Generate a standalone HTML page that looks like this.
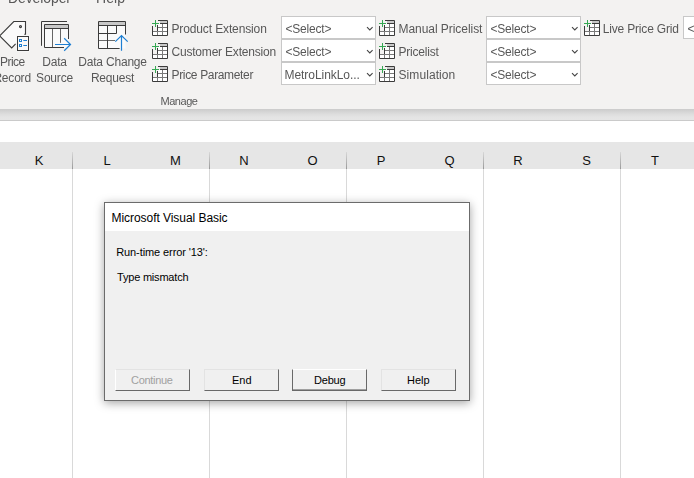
<!DOCTYPE html>
<html><head><meta charset="utf-8">
<style>
html,body{margin:0;padding:0;}
body{width:694px;height:478px;overflow:hidden;position:relative;background:#fff;font-family:"Liberation Sans",sans-serif;}
.abs{position:absolute;}
#ribbon{left:0;top:0;width:694px;height:109px;background:#f3f2f1;}
#shadow{left:0;top:109px;width:694px;height:11px;background:linear-gradient(#cbcbcb,#d3d3d3 20%,#dedede 50%,#e4e4e4 75%,#e5e5e5);border-bottom:1px solid #cacaca;}
#hdr{left:0;top:142px;width:694px;height:27px;background:#e6e6e6;}
.t{position:absolute;white-space:nowrap;color:#585858;line-height:14px;}
.sel{position:absolute;width:93px;height:21px;border:1px solid #c8c8c8;background:#fff;}
.col{position:absolute;font-size:13px;line-height:15px;color:#111;transform:translateX(-50%);top:153px;}
.vl{position:absolute;width:1px;top:152px;height:17px;background:linear-gradient(#d8d8d8,#999);}
.vb{position:absolute;width:1px;top:169px;height:309px;background:#d9d9d9;}
#dlg{left:104px;top:202px;width:364px;height:197px;border:1px solid #6b6b6b;background:#f0f0f0;box-shadow:0 2px 9px rgba(0,0,0,0.36);}
#ttl{left:0;top:0;width:364px;height:28px;background:#fff;}
.d{position:absolute;white-space:nowrap;color:#000;line-height:13px;}
.btn{position:absolute;top:166px;width:73px;height:20px;border:1px solid;border-color:#e3e3e3 #696969 #696969 #e3e3e3;background:#f0f0f0;font-size:11px;line-height:13px;text-align:center;}
</style></head><body>
<div id="ribbon" class="abs"></div>
<div id="shadow" class="abs"></div>
<div id="hdr" class="abs"></div>




<div class="sel" style="left:281px;top:16px;"></div>
<div class="sel" style="left:281px;top:39px;"></div>
<div class="sel" style="left:281px;top:62px;"></div>
<div class="sel" style="left:486px;top:16px;"></div>
<div class="sel" style="left:486px;top:39px;"></div>
<div class="sel" style="left:486px;top:62px;"></div>
<div class="sel" style="left:683px;top:16px;"></div>

<div id="rt" class="abs" style="left:0;top:0;width:694px;height:109px;will-change:transform;">
<div class="t" style="left:8.00px;top:-9px;font-size:14px;letter-spacing:-0.10px;">Developer</div>
<div class="t" style="left:96.00px;top:-9px;font-size:14px;letter-spacing:0.07px;">Help</div>
<div class="t" style="left:0.00px;top:55px;font-size:12px;letter-spacing:-0.55px;">Price</div>
<div class="t" style="left:-6.60px;top:71px;font-size:12px;letter-spacing:-0.20px;">Record</div>
<div class="t" style="left:42.20px;top:55px;font-size:12px;letter-spacing:-0.20px;">Data</div>
<div class="t" style="left:36.10px;top:71px;font-size:12px;letter-spacing:-0.20px;">Source</div>
<div class="t" style="left:78.30px;top:55px;font-size:12px;letter-spacing:-0.20px;">Data Change</div>
<div class="t" style="left:90.90px;top:71px;font-size:12px;letter-spacing:-0.20px;">Request</div>
<div class="t" style="left:171.50px;top:22px;font-size:12px;letter-spacing:-0.13px;">Product Extension</div>
<div class="t" style="left:171.50px;top:45px;font-size:12px;letter-spacing:-0.20px;">Customer Extension</div>
<div class="t" style="left:171.50px;top:68px;font-size:12px;letter-spacing:-0.34px;">Price Parameter</div>
<div class="t" style="left:398.50px;top:22px;font-size:12px;letter-spacing:-0.05px;">Manual Pricelist</div>
<div class="t" style="left:398.50px;top:45px;font-size:12px;letter-spacing:-0.20px;">Pricelist</div>
<div class="t" style="left:398.50px;top:68px;font-size:12px;letter-spacing:0.08px;">Simulation</div>
<div class="t" style="left:602.70px;top:22px;font-size:12px;letter-spacing:-0.17px;">Live Price Grid</div>
<div class="t" style="left:160.50px;top:94px;font-size:11px;letter-spacing:-0.46px;">Manage</div>
<div class="t" style="left:285.50px;top:22px;font-size:12px;letter-spacing:-0.20px;">&lt;Select&gt;</div>
<div class="t" style="left:285.50px;top:45px;font-size:12px;letter-spacing:-0.20px;">&lt;Select&gt;</div>
<div class="t" style="left:284.50px;top:68px;font-size:12px;letter-spacing:-0.05px;">MetroLinkLo...</div>
<div class="t" style="left:490.50px;top:22px;font-size:12px;letter-spacing:-0.20px;">&lt;Select&gt;</div>
<div class="t" style="left:490.50px;top:45px;font-size:12px;letter-spacing:-0.20px;">&lt;Select&gt;</div>
<div class="t" style="left:490.50px;top:68px;font-size:12px;letter-spacing:-0.20px;">&lt;Select&gt;</div>
<div class="t" style="left:687.50px;top:22px;font-size:12px;letter-spacing:-0.20px;">&lt;Select&gt;</div>
</div>
<svg class="abs" style="left:0;top:0" width="694" height="109" viewBox="0 0 694 109" fill="none">
<defs>
<g id="ti">
<path d="M6 4H15V15H1V12H6Z" fill="#fff"/>
<rect x="8" y="1" width="7" height="2" fill="#c8c8c8"/>
<path d="M5.5 11V15M10.5 4V15M6 7.5H15M1 11.5H15" stroke="#7a7a7a"/>
<path d="M0.5 6V15.5H15.5V0.5H6M8 3.5H15M5.5 5V11" stroke="#3b3b3b"/>
<path d="M3.5 0V7M0 3.5H7" stroke="#35a853"/>
</g>
<path id="chev" d="M0 0L2.8 2.7L5.6 0" stroke="#444" stroke-width="1.1"/>
</defs>
<use href="#ti" x="152" y="20"/><use href="#ti" x="152" y="43"/><use href="#ti" x="152" y="66"/>
<use href="#ti" x="379" y="20"/><use href="#ti" x="379" y="43"/><use href="#ti" x="379" y="66"/>
<use href="#ti" x="584" y="20"/>
<use href="#chev" x="367" y="27.2"/><use href="#chev" x="367" y="50.2"/><use href="#chev" x="367" y="73.2"/>
<use href="#chev" x="572" y="27.2"/><use href="#chev" x="572" y="50.2"/><use href="#chev" x="572" y="73.2"/>

<!-- price record -->
<path d="M24.3 34.2H25.5V21.5H13.8L-0.3 35.8L11.7 47.9L15.6 43.8" stroke="#3b3b3b" fill="#fafafa" stroke-width="1.1"/>
<circle cx="20.5" cy="26.6" r="1" stroke="#3b3b3b" stroke-width="1.1"/>
<rect x="16.5" y="35.5" width="13" height="16" fill="#fafafa"/>
<rect x="17.5" y="36.5" width="11" height="14" fill="#fafafa" stroke="#3b3b3b"/>
<rect x="19.5" y="39.5" width="2" height="2" stroke="#1e7fd2"/>
<rect x="19.5" y="44.5" width="2" height="2" stroke="#1e7fd2"/>
<path d="M23.3 40.5H27M23.3 45.5H27" stroke="#1e7fd2"/>

<!-- data source -->
<path d="M41.5 45.8V21.5H67" stroke="#3b3b3b"/>
<rect x="44.5" y="24.5" width="24" height="23" fill="#fafafa"/>
<rect x="45" y="25" width="23" height="3" fill="#c8c8c8"/>
<path d="M52.5 29V47M60.5 29V42.8" stroke="#666"/>
<path d="M68.5 39V24.5H44.5V47.5H64M44.5 28.5H68.5" stroke="#3b3b3b"/>
<path d="M55 44.5H70.5M64.2 38.3L70.5 44.5L64.2 50.7" stroke="#1e7fd2" stroke-width="1.2"/>

<!-- data change request -->
<rect x="98.5" y="21.5" width="27" height="27" fill="#fafafa"/>
<rect x="99" y="22" width="26" height="3" fill="#c8c8c8"/>
<path d="M98.5 40.5H115" stroke="#6a6a6a"/>
<path d="M125.5 34.5V21.5H98.5V48.5H119.6M98.5 25.5H125.5M107.5 25.5V48.5M116.5 25.5V33.5H98.5" stroke="#3b3b3b"/>
<path d="M121.5 50.8V35.5M115.3 41.7L121.5 35.5L127.7 41.7" stroke="#1e7fd2" stroke-width="1.2"/>
</svg>

<div class="col" style="left:39px;">K</div>
<div class="col" style="left:107px;">L</div>
<div class="col" style="left:175.5px;">M</div>
<div class="col" style="left:244px;">N</div>
<div class="col" style="left:312.5px;">O</div>
<div class="col" style="left:381px;">P</div>
<div class="col" style="left:449.5px;">Q</div>
<div class="col" style="left:518px;">R</div>
<div class="col" style="left:586.5px;">S</div>
<div class="col" style="left:655px;">T</div>
<div class="vl" style="left:72px"></div><div class="vl" style="left:209px"></div><div class="vl" style="left:346px"></div><div class="vl" style="left:483px"></div><div class="vl" style="left:620px"></div>
<div class="vb" style="left:72px"></div><div class="vb" style="left:209px"></div><div class="vb" style="left:346px"></div><div class="vb" style="left:483px"></div><div class="vb" style="left:620px"></div>

<div id="dlg" class="abs">
<div id="ttl" class="abs"></div>
<div class="btn" style="left:10px;border-left-color:#fff;"></div>
<div class="btn" style="left:99px;"></div>
<div class="btn" style="left:187px;border-color:#fff #696969 #696969 #696969;box-shadow:inset 0 -1px 0 #a0a0a0;"></div>
<div class="btn" style="left:276px;"></div>
<div class="d" style="left:6.50px;top:9px;font-size:12px;letter-spacing:-0.05px;">Microsoft Visual Basic</div>
<div class="d" style="left:11.20px;top:43px;font-size:11px;letter-spacing:-0.09px;">Run-time error '13':</div>
<div class="d" style="left:12.00px;top:68px;font-size:11px;letter-spacing:-0.20px;">Type mismatch</div>
<div class="d" style="left:26.00px;top:171px;font-size:11px;letter-spacing:-0.31px;color:#a0a0a0;">Continue</div>
<div class="d" style="left:127.00px;top:171px;font-size:11px;letter-spacing:0.00px;">End</div>
<div class="d" style="left:209.00px;top:171px;font-size:11px;letter-spacing:-0.20px;">Debug</div>
<div class="d" style="left:302.00px;top:171px;font-size:11px;letter-spacing:0.00px;">Help</div>
</div>
</body></html>
